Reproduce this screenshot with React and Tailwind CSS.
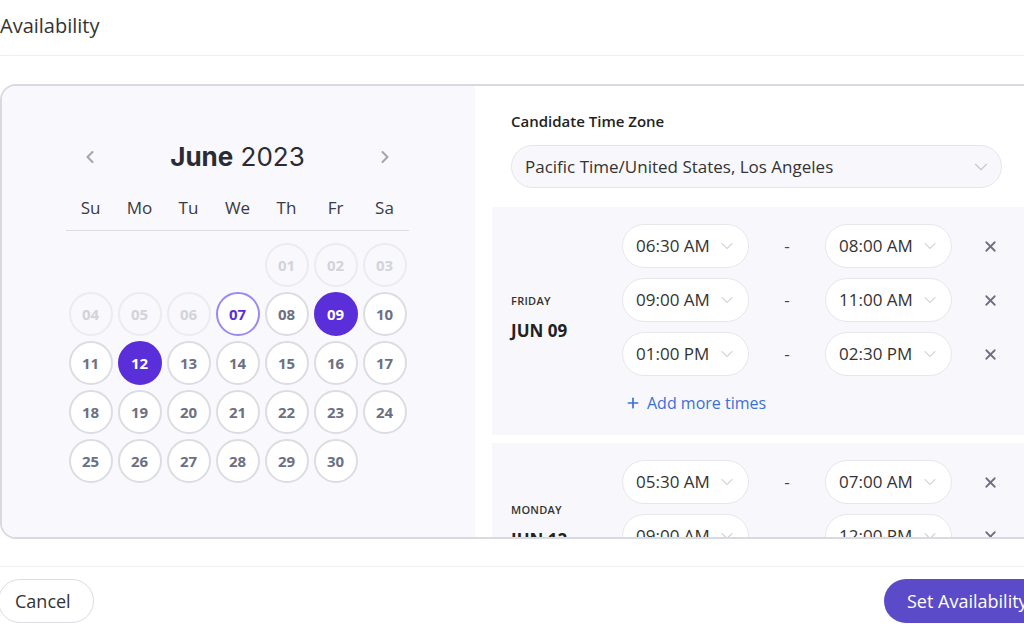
import { ChevronLeft, ChevronRight, ChevronDown, X, Plus } from 'lucide-react';

const weekdays = ['Su', 'Mo', 'Tu', 'We', 'Th', 'Fr', 'Sa'];

const days = [
  null, null, null, null,
  ...Array.from({ length: 30 }, (_, i) => i + 1),
];

const pad = (n) => String(n).padStart(2, '0');

function DayCircle({ day }) {
  if (!day) return <div className="w-[44px] h-[44px]" />;

  let cls = 'bg-white border-[#dcdce3] text-[#6c7083]';
  if (day <= 6) cls = 'bg-transparent border-[#ebebf0] text-[#d3d3da]';
  if (day === 7) cls = 'bg-white border-[#9a88f3] text-[#5a2ed8]';
  if (day === 9 || day === 12) cls = 'bg-[#5a2ed8] border-[#5a2ed8] text-white';

  return (
    <div
      className={`w-[44px] h-[44px] rounded-full border-2 flex items-center justify-center text-[15px] font-bold ${cls}`}
    >
      {pad(day)}
    </div>
  );
}

function TimePill({ value }) {
  return (
    <div className="w-[127px] h-[44px] rounded-full border border-[#e6e6ec] bg-white flex items-center pl-[13px] pr-[11px] justify-between">
      <span className="text-[17px] text-[#333]">{value}</span>
      <ChevronDown className="w-[20px] h-[20px] text-[#c6c6cf]" strokeWidth={1.25} />
    </div>
  );
}

function TimeRow({ from, to }) {
  return (
    <div className="flex items-center">
      <TimePill value={from} />
      <div className="w-[76px] flex justify-center text-[17px] text-[#444]">-</div>
      <TimePill value={to} />
      <div className="w-[76px] flex justify-center">
        <X className="w-[17px] h-[17px] text-[#6b6f80]" strokeWidth={2.5} />
      </div>
    </div>
  );
}

function DayBlock({ weekday, date, ranges }) {
  return (
    <div className="w-[540px] bg-[#f8f8fc] flex pl-[19px] pt-[17px] pb-[20px]">
      <div className="w-[111px] flex flex-col justify-center -mt-[4px]">
        <p className="text-[11px] font-semibold text-[#333] leading-[16px] tracking-wide">{weekday}</p>
        <p className="text-[17px] font-bold text-[#222] leading-[24px] mt-[10px]">{date}</p>
      </div>
      <div className="flex flex-col gap-[10px]">
        {ranges.map(([from, to]) => (
          <TimeRow key={from} from={from} to={to} />
        ))}
        <button className="mt-[5px] flex items-center gap-[6px] pl-[3px] text-[16px] text-[#3b6fd9] leading-[24px]">
          <Plus className="w-[16px] h-[16px]" strokeWidth={2.5} />
          Add more times
        </button>
      </div>
    </div>
  );
}

export default function App() {
  return (
    <div className="w-[1024px] h-[624px] overflow-hidden bg-white font-['Open_Sans',sans-serif]">
      {/* Encabezado */}
      <div className="h-[56px] border-b border-[#efeff3] flex items-start pt-[12px]">
        <h1 className="text-[20px] leading-[28px] text-[#333]">Availability</h1>
      </div>

      {/* Tarjeta principal */}
      <div className="mt-[28px] w-[1080px] h-[455px] rounded-[16px] border-2 border-[#d9d9e1] flex overflow-hidden">
        {/* Calendario */}
        <div className="w-[473px] shrink-0 bg-[#f8f8fd] flex flex-col items-center pt-[55px] pr-[2px]">
          <div className="w-[343px] flex items-center justify-between px-[14px]">
            <ChevronLeft className="w-[20px] h-[20px] text-[#a5a5b0]" strokeWidth={2.5} />
            <h2 className="text-[26px] leading-[32px] text-[#2b2b33] font-['Inter',sans-serif]">
              <span className="font-bold">June</span> <span className="font-normal">2023</span>
            </h2>
            <ChevronRight className="w-[20px] h-[20px] text-[#a5a5b0]" strokeWidth={2.5} />
          </div>

          <div className="mt-[23px] w-[343px] border-b border-[#dcdce2] pb-[10px] grid grid-cols-[repeat(7,49px)]">
            {weekdays.map((d) => (
              <div key={d} className="text-center text-[17px] leading-[24px] font-medium text-[#3a3a42]">
                {d}
              </div>
            ))}
          </div>

          <div className="mt-[12px] w-[343px] grid grid-cols-[repeat(7,49px)] gap-y-[5px]">
            {days.map((d, i) => (
              <div key={i} className="flex justify-center">
                <DayCircle day={d} />
              </div>
            ))}
          </div>
        </div>

        {/* Horarios */}
        <div className="flex-1 bg-white pl-[17px] pt-[25px]">
          <div className="pl-[19px]">
            <p className="text-[15px] leading-[20px] font-semibold text-[#222]">Candidate Time Zone</p>
            <div className="mt-[14px] w-[491px] h-[43px] rounded-full border border-[#e4e4ea] bg-[#f8f8fc] flex items-center justify-between pl-[13px] pr-[9px]">
              <span className="text-[17px] text-[#333]">Pacific Time/United States, Los Angeles</span>
              <ChevronDown className="w-[22px] h-[22px] text-[#c6c6cf]" strokeWidth={1.25} />
            </div>
          </div>

          <div className="mt-[19px] flex flex-col gap-[8px]">
            <DayBlock
              weekday="FRIDAY"
              date="JUN 09"
              ranges={[
                ['06:30 AM', '08:00 AM'],
                ['09:00 AM', '11:00 AM'],
                ['01:00 PM', '02:30 PM'],
              ]}
            />
            <DayBlock
              weekday="MONDAY"
              date="JUN 12"
              ranges={[
                ['05:30 AM', '07:00 AM'],
                ['09:00 AM', '12:00 PM'],
              ]}
            />
          </div>
        </div>
      </div>

      {/* Pie */}
      <div className="mt-[27px] border-t border-[#efeff3] pt-[12px] flex items-center justify-between">
        <button className="-ml-[2px] h-[44px] pl-[16px] pr-[22px] rounded-full border border-[#dcdce2] bg-white text-[18px] text-[#333]">
          Cancel
        </button>
        <button className="h-[44px] w-[160px] rounded-l-full bg-[#5b4bc8] text-white text-[18px] text-left pl-[23px] -mr-[20px]">
          Set Availability
        </button>
      </div>
    </div>
  );
}
